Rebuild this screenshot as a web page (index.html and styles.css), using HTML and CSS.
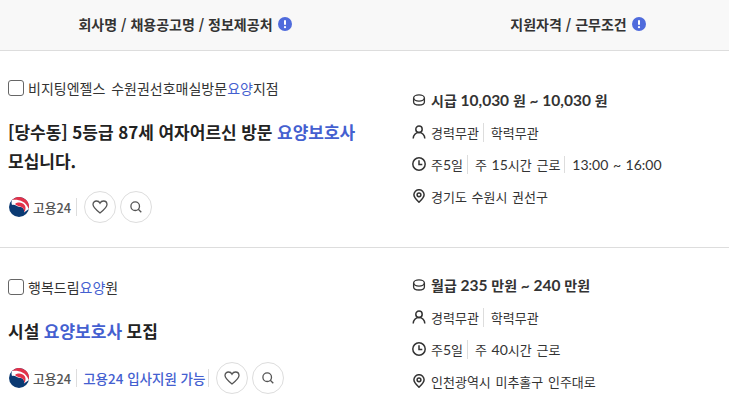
FILE: index.html
```html
<!DOCTYPE html>
<html lang="ko">
<head>
<meta charset="utf-8">
<title>채용공고</title>
<link rel="stylesheet" href="styles.css">
</head>
<body>
<svg class="defs" width="0" height="0" aria-hidden="true">
  <defs>
    <symbol id="i-info" viewBox="0 0 14 14"><circle cx="7" cy="7" r="7" fill="#4f6bdc"/><rect x="6" y="3" width="2" height="5" rx="1" fill="#fff"/><circle cx="7" cy="10.2" r="1.1" fill="#fff"/></symbol>
    <symbol id="i-coin" viewBox="0 0 14 14"><g fill="none" stroke="#333" stroke-width="1.3"><ellipse cx="7" cy="5" rx="5.400" ry="3.100"/><path d="M1.600 5V9C1.600 10.800 4 12 7 12S12.400 10.800 12.400 9V5"/></g></symbol>
    <symbol id="i-user" viewBox="0 0 14 14"><g fill="none" stroke="#333" stroke-width="1.500"><circle cx="7" cy="4.200" r="3.200"/><path d="M1.200 13.600C1.200 10.200 3.700 7.600 7 7.600S12.800 10.200 12.800 13.600"/></g></symbol>
    <symbol id="i-clock" viewBox="0 0 14 14"><g fill="none" stroke="#333" stroke-width="1.500"><circle cx="7" cy="7" r="6.200"/><path d="M7 3.300V7.500H10.300"/></g></symbol>
    <symbol id="i-pin" viewBox="0 0 14 14"><g fill="none" stroke="#333" stroke-width="1.500"><path d="M7 13.300C4 10.500 1.900 8.300 1.900 5.800a5.100 5.100 0 0 1 10.200 0c0 2.500-2.100 4.700-5.100 7.500z"/><circle cx="7" cy="5.800" r="1.900"/></g></symbol>
    <symbol id="i-heart" viewBox="0 0 16 14"><path d="M8 13C3.500 9.500 1 7.200 1 4.600 1 2.600 2.500 1 4.500 1 6 1 7.300 1.800 8 3.100 8.700 1.800 10 1 11.500 1 13.500 1 15 2.600 15 4.600 15 7.200 12.500 9.500 8 13z" fill="none" stroke="#555" stroke-width="1.300"/></symbol>
    <symbol id="i-search" viewBox="0 0 12 12"><g fill="none" stroke="#555" stroke-width="1.300"><circle cx="5.200" cy="5.200" r="4.300"/><path d="M8.300 8.300L11.300 11.300"/></g></symbol>
    <symbol id="i-gov" viewBox="0 0 20 20"><circle cx="10" cy="10" r="10" fill="#0b3a73"/><path d="M3 3A10 10 0 0 1 19.800 12C18 8 14 3 3 3z" fill="#e2324a"/><path d="M3 3C9 2.300 16.500 3.500 19.800 12L15 15.500C16 12 13.500 10 10.500 10 8 10 6 7 3 8 2.400 6.300 2.400 4.500 3 3z" fill="#fff"/><path d="M6 7C9 4.700 13.500 5.200 15.700 8.200 17.300 10.600 16.500 13.500 15 15.200 15.600 12.500 13.900 9.900 11 9.500 9 9.200 7.500 8.300 6 7z" fill="#e2324a"/></symbol>
  </defs>
</svg>
<div class="table">
  <div class="head">
    <div class="head-left">회사명 / 채용공고명 / 정보제공처<svg class="info"><use href="#i-info"/></svg></div>
    <div class="head-right">지원자격 / 근무조건<svg class="info"><use href="#i-info"/></svg></div>
  </div>

  <div class="row row-one">
    <div class="left">
      <label class="company"><span class="check"></span><span>비지팅엔젤스 수원권선호매실방문<em>요양</em>지점</span></label>
      <h2 class="title">[당수동] 5등급 87세 여자어르신 방문 <em>요양보호사</em> 모십니다.</h2>
      <div class="source">
        <svg class="gov"><use href="#i-gov"/></svg><span class="source-name">고용24</span>
        <span class="vbar"></span>
        <button class="round"><svg class="heart"><use href="#i-heart"/></svg></button>
        <button class="round"><svg class="search"><use href="#i-search"/></svg></button>
      </div>
    </div>
    <div class="right">
      <div class="line pay"><svg class="ico"><use href="#i-coin"/></svg><span>시급<span class="num"> 10,030 </span>원<span class="num"> ~ 10,030 </span>원</span></div>
      <div class="line"><svg class="ico"><use href="#i-user"/></svg><span class="seg">경력무관</span><span class="seg">학력무관</span></div>
      <div class="line"><svg class="ico"><use href="#i-clock"/></svg><span class="seg">주<span class="num">5</span>일</span><span class="seg">주<span class="num"> 15</span>시간 근로</span><span class="seg num">13:00 ~ 16:00</span></div>
      <div class="line"><svg class="ico"><use href="#i-pin"/></svg><span>경기도 수원시 권선구</span></div>
    </div>
  </div>

  <div class="row row-two">
    <div class="left">
      <label class="company"><span class="check"></span><span>행복드림<em>요양</em>원</span></label>
      <h2 class="title">시설 <em>요양보호사</em> 모집</h2>
      <div class="source">
        <svg class="gov"><use href="#i-gov"/></svg><span class="source-name">고용24</span>
        <span class="vbar"></span>
        <span class="apply">고용24 입사지원 가능</span>
        <span class="vbar"></span>
        <button class="round"><svg class="heart"><use href="#i-heart"/></svg></button>
        <button class="round"><svg class="search"><use href="#i-search"/></svg></button>
      </div>
    </div>
    <div class="right">
      <div class="line pay"><svg class="ico"><use href="#i-coin"/></svg><span>월급<span class="num"> 235 </span>만원<span class="num"> ~ 240 </span>만원</span></div>
      <div class="line"><svg class="ico"><use href="#i-user"/></svg><span class="seg">경력무관</span><span class="seg">학력무관</span></div>
      <div class="line"><svg class="ico"><use href="#i-clock"/></svg><span class="seg">주<span class="num">5</span>일</span><span class="seg">주<span class="num"> 40</span>시간 근로</span></div>
      <div class="line"><svg class="ico"><use href="#i-pin"/></svg><span>인천광역시 미추홀구 인주대로</span></div>
    </div>
  </div>
</div>
</body>
</html>
```
FILE: styles.css
```css
* { box-sizing: border-box; }
html, body { margin: 0; padding: 0; height: 411px; overflow: hidden; background: #fff; }
body { font-family: "Noto Sans CJK KR", sans-serif; color: #333; font-size: 14px; }
em { font-style: normal; color: #4460d0; }
.defs { position: absolute; }
.head { display: grid; grid-template-columns: 370px 1fr; height: 51px; padding-bottom: 2px; background: #f8f8f8; border-bottom: 1px solid #ddd; align-items: center; font-weight: 600; font-size: 14px; color: #333; }
.head-left, .head-right { display: flex; justify-content: center; align-items: center; }
.head-right { padding-left: 57px; }
.info { width: 14px; height: 14px; margin-left: 5px; }
.row { display: grid; grid-template-columns: 412px 1fr; border-bottom: 1px solid #ddd; }
.row-one { height: 197px; }
.row-two { border-bottom: 0; }
.left { padding: 28px 0 0 8px; }
.right { padding-top: 33px; }
.row-two .left { padding-top: 29px; }
.row-two .right { padding-top: 21px; }
.company { display: flex; align-items: center; height: 20px; gap: 4px; font-size: 14px; color: #333; word-spacing: 2px; }
.row-one .company { margin-top: -1px; }
.check { width: 16px; height: 16px; border: 1px solid #666; border-radius: 3px; background: #fff; }
.title { margin: 19px 0 0; width: 360px; font-size: 17px; line-height: 29px; font-weight: 600; color: #222; word-spacing: -0.200px; word-break: keep-all; }
.source { display: flex; align-items: center; height: 32px; margin-top: 16px; }
.row-two .source { margin-top: 17px; }
.gov { width: 20px; height: 20px; margin-left: 1px; }
.source-name { margin-left: 4px; font-size: 12.800px; font-weight: 500; color: #555; }
.vbar { width: 1px; height: 18px; background: #ddd; margin: 0 7px 0 5px; }
.apply { margin: 0 -2px 0 -1px; font-size: 13.500px; font-weight: 500; color: #4460d0; }
.round { width: 32px; height: 32px; padding: 0; border: 1px solid #ddd; border-radius: 50%; background: #fff; display: flex; align-items: center; justify-content: center; margin-right: 4px; }
.heart { width: 16px; height: 14px; }
.search { width: 12px; height: 12px; }
.line { display: flex; align-items: center; height: 32px; font-size: 13px; color: #333; word-spacing: 1px; }
.num { font-family: Lato, "Noto Sans CJK KR", sans-serif; font-size: 14px; }
.pay { font-weight: 700; font-size: 14px; word-spacing: 0; }
.pay .num { font-size: 15.500px; }
.ico { width: 14px; height: 14px; margin-right: 5px; flex: none; }
.seg + .seg { margin-left: 4px; padding-left: 7px; border-left: 1px solid #ddd; }
```
